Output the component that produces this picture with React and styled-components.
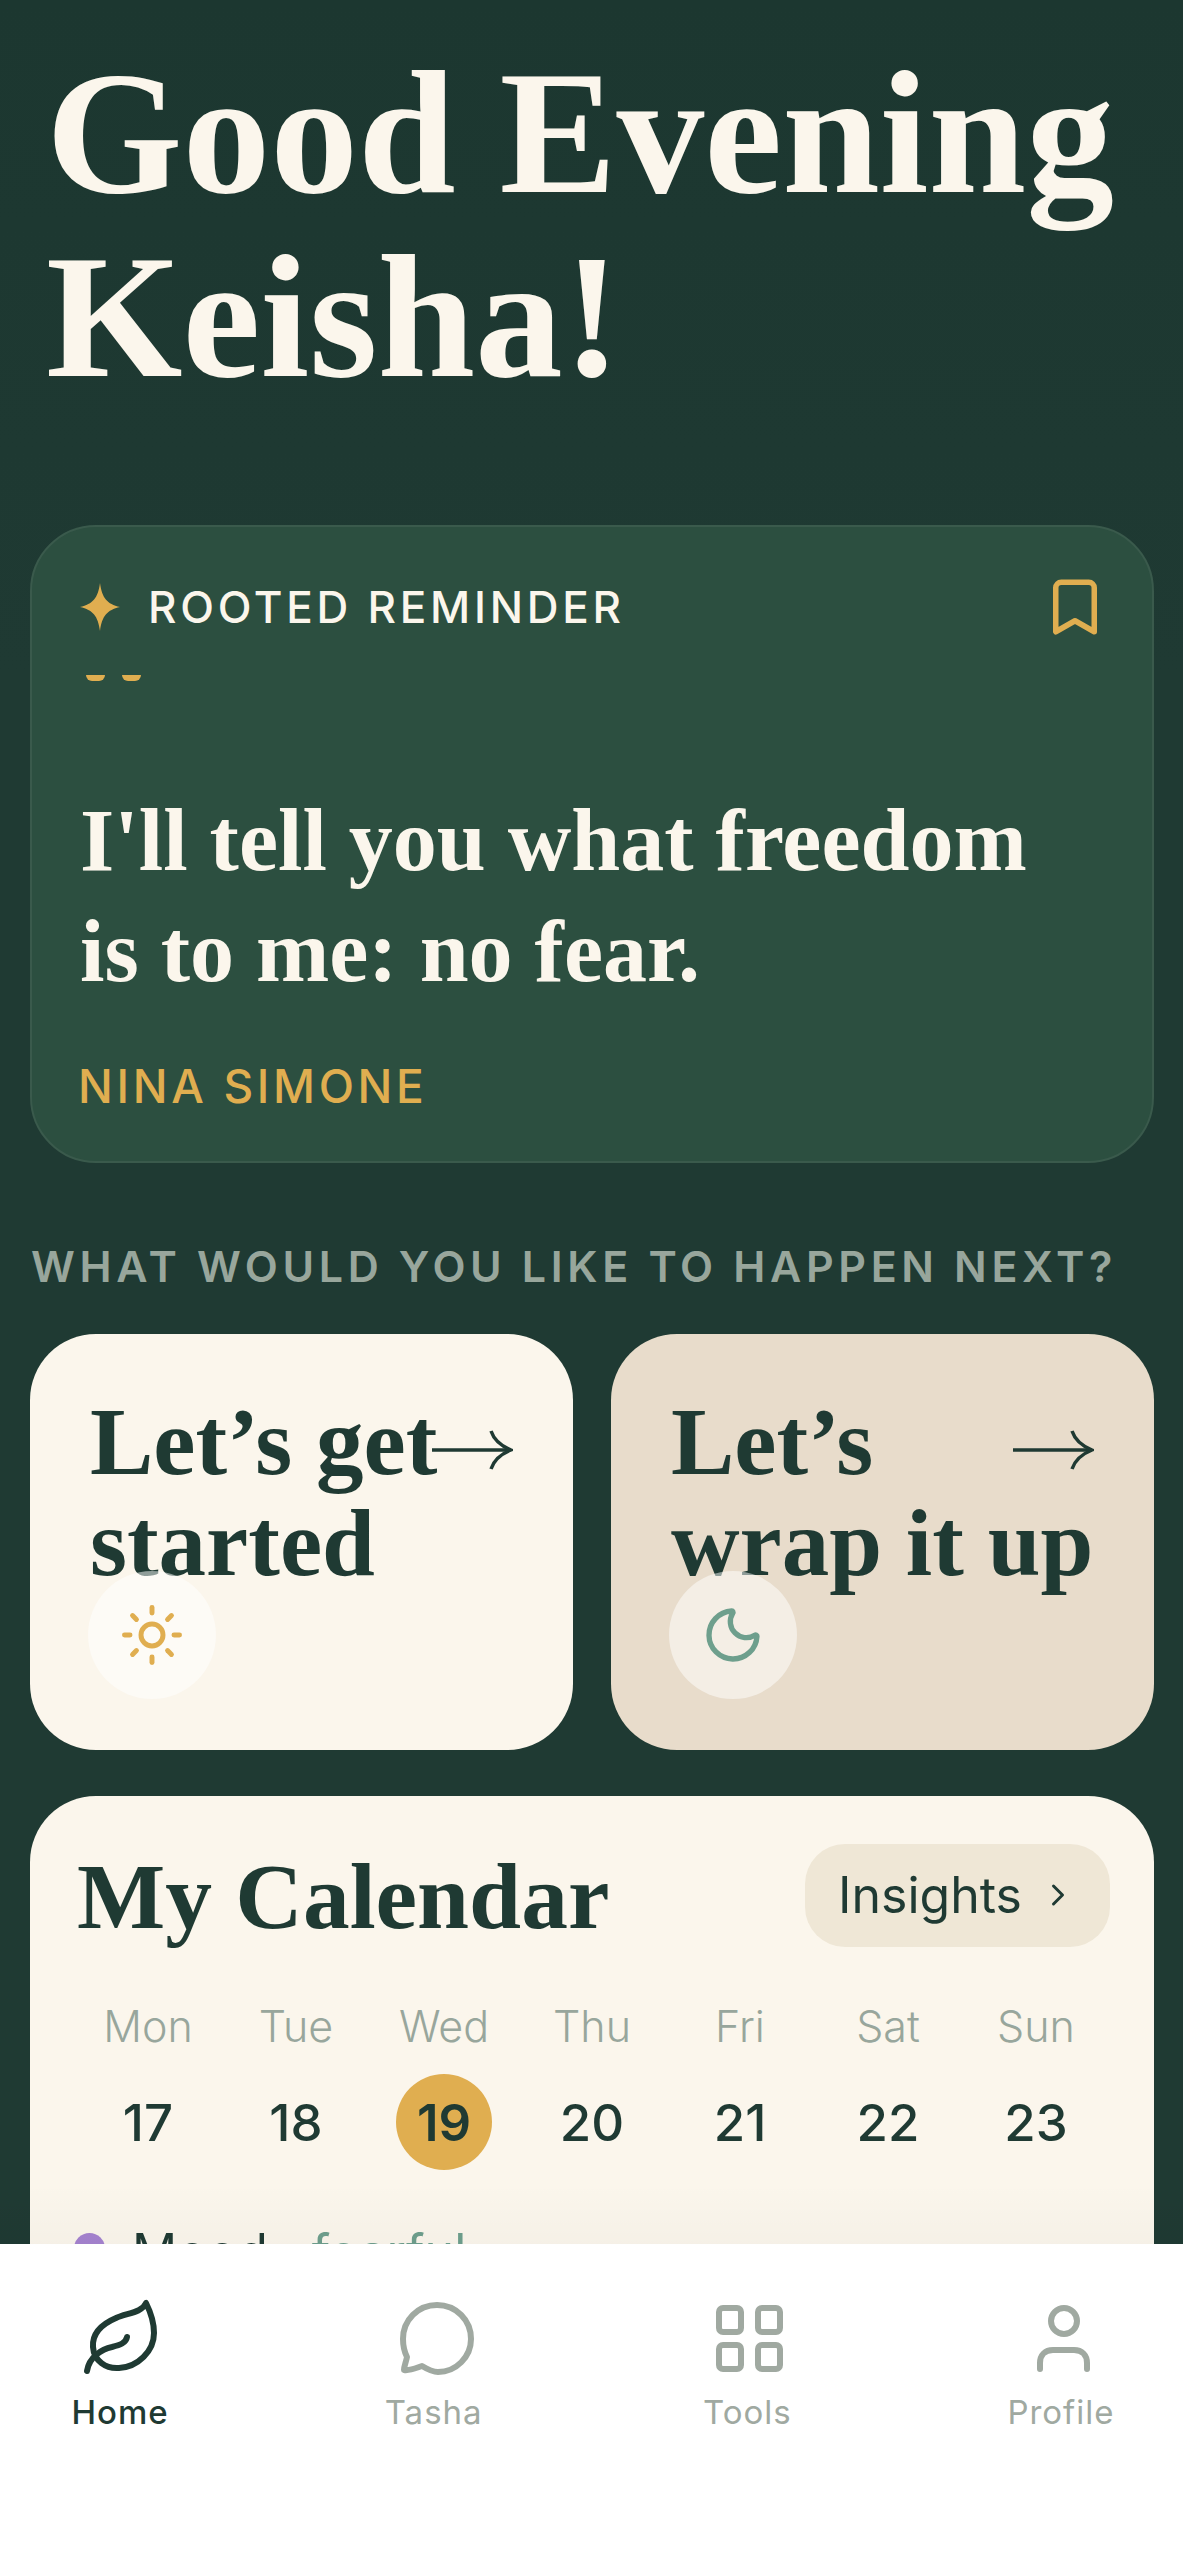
import React from "react";
import styled, { createGlobalStyle } from "styled-components";
import { Bookmark, ChevronRight, Moon, Sun } from "lucide-react";

const GlobalStyle = createGlobalStyle`
  html, body {
    margin: 0;
    padding: 0;
    background: #1f3a33;
  }
  * {
    box-sizing: border-box;
  }
`;

const serif = `"Liberation Serif", serif`;
const sans = `Inter, "Liberation Sans", sans-serif`;

const Screen = styled.div`
  width: 1183px;
  height: 2560px;
  display: flex;
  flex-direction: column;
  overflow: hidden;
  font-family: ${sans};
`;

const Scroller = styled.main`
  flex: 1;
  min-height: 0;
  overflow: hidden;
  background: linear-gradient(#1c3730, #1f3a33 30%);
  padding: 0 29px 0 30px;
`;

const Greeting = styled.h1`
  margin: 0;
  padding: 41px 0 0 16px;
  height: 525px;
  font-family: ${serif};
  font-weight: 700;
  font-size: 175.5px;
  line-height: 184px;
  color: #fbf6ec;
`;

const ReminderCard = styled.section`
  height: 638px;
  padding: 50px 44px 0 46px;
  border: 2px solid #3a5a4c;
  border-radius: 66px;
  background: #2c4f40;
`;

const ReminderHead = styled.div`
  display: flex;
  align-items: center;
  justify-content: space-between;
  height: 60px;
`;

const ReminderTitle = styled.div`
  display: flex;
  align-items: center;
  gap: 26px;
  font-size: 44px;
  font-weight: 500;
  letter-spacing: 0.085em;
  color: #fbf6ec;
`;

const QuoteDots = styled.div`
  display: flex;
  gap: 17px;
  margin: 38px 0 0 8px;
`;

const QuoteDot = styled.span`
  width: 19px;
  height: 6px;
  border-radius: 0 0 10px 10px;
  background: #e0ae50;
`;

const Quote = styled.p`
  margin: 104px 0 0 2px;
  font-family: ${serif};
  font-weight: 700;
  font-size: 88px;
  line-height: 111px;
  color: #fbf6ec;
`;

const Author = styled.div`
  margin-top: 51px;
  font-size: 46px;
  font-weight: 500;
  letter-spacing: 0.08em;
  color: #e0ae50;
`;

const SectionLabel = styled.h2`
  margin: 76px 0 0 1px;
  height: 95px;
  font-size: 43px;
  line-height: 54px;
  font-weight: 600;
  letter-spacing: 0.108em;
  white-space: nowrap;
  color: #98a69c;
`;

const ActionRow = styled.div`
  display: grid;
  grid-template-columns: 1fr 1fr;
  gap: 38px;
`;

const ActionCard = styled.article`
  height: 416px;
  padding: 58px 60px 0;
  border-radius: 66px;
  background: ${({ $tone }) => ($tone === "sand" ? "#e8dccb" : "#fbf6ec")};
`;

const ActionTop = styled.div`
  display: flex;
  justify-content: space-between;
  align-items: flex-start;
`;

const ActionTitle = styled.h3`
  margin: 0;
  width: 341px;
  white-space: nowrap;
  font-family: ${serif};
  font-weight: 700;
  font-size: 95px;
  line-height: 101px;
  color: #1f3a33;
`;

const ArrowIcon = styled.svg`
  flex: none;
  width: 82px;
  height: 44px;
  margin-top: 36px;
  fill: none;
  stroke: #1f3a33;
  stroke-width: 3.5;
`;

const IconBubble = styled.div`
  position: relative;
  width: 128px;
  height: 128px;
  margin: -23px 0 0 -2px;
  border-radius: 50%;
  display: flex;
  align-items: center;
  justify-content: center;
  background: rgba(255, 255, 255, 0.5);
  color: ${({ $color }) => $color};
`;

const CalendarCard = styled.section`
  margin-top: 46px;
  height: 700px;
  padding: 49px 44px 0;
  border-radius: 66px 66px 0 0;
  background: #fbf6ec;
`;

const CalendarHead = styled.div`
  display: flex;
  align-items: center;
  justify-content: space-between;
  padding-left: 3px;
`;

const CalendarTitle = styled.h2`
  margin: 0;
  font-family: ${serif};
  font-weight: 700;
  font-size: 93.5px;
  line-height: 103px;
  color: #1f3a33;
`;

const InsightsButton = styled.button`
  display: flex;
  align-items: center;
  gap: 18px;
  height: 103px;
  margin-top: -3px;
  padding: 0 34px 0 33px;
  border: 0;
  border-radius: 40px;
  background: #efe7d6;
  font-family: ${sans};
  font-size: 50px;
  color: #1f3a33;
`;

const WeekGrid = styled.div`
  display: grid;
  grid-template-columns: repeat(7, 148px);
  justify-items: center;
  align-items: center;
  margin: 48px 0 0 0;
`;

const DayName = styled.span`
  height: 60px;
  font-size: 43px;
  line-height: 60px;
  font-weight: 300;
  color: #98a69c;
`;

const DayNumber = styled.span`
  width: 96px;
  height: 96px;
  margin-top: 18px;
  border-radius: 50%;
  display: flex;
  align-items: center;
  justify-content: center;
  font-size: 51px;
  font-weight: ${({ $active }) => ($active ? 600 : 500)};
  color: #1f3a33;
  background: ${({ $active }) => ($active ? "#e0ae50" : "transparent")};
`;

const MoodRow = styled.div`
  display: flex;
  align-items: flex-start;
  margin-top: 52px;
  font-size: 50px;
  line-height: 60px;
`;

const MoodDot = styled.span`
  width: 31px;
  height: 31px;
  margin: 11px 27px 0 0;
  border-radius: 50%;
  background: #a583cf;
`;

const MoodWord = styled.span`
  color: ${({ $muted }) => ($muted ? "#6e9f8d" : "#1f3a33")};
  margin-right: 44px;
`;

const BottomNav = styled.nav`
  position: relative;
  flex: none;
  height: 316px;
  padding: 53px 27px 0 25px;
  display: flex;
  justify-content: space-between;
  background: #fff;
  &::before {
    content: "";
    position: absolute;
    left: 0;
    right: 0;
    bottom: 100%;
    height: 60px;
    background: linear-gradient(rgba(0, 0, 0, 0), rgba(0, 0, 0, 0.025));
    pointer-events: none;
  }
`;

const NavItem = styled.a`
  width: 190px;
  display: flex;
  flex-direction: column;
  align-items: center;
  gap: 15px;
  color: ${({ $active }) => ($active ? "#1f3a33" : "#a0a9a1")};
`;

const NavIcon = styled.svg`
  width: 84px;
  height: 80px;
  fill: none;
  stroke: currentColor;
  stroke-width: 6;
  stroke-linecap: round;
  stroke-linejoin: round;
`;

const NavLabel = styled.span`
  font-size: 33px;
  line-height: 40px;
  font-weight: ${({ $active }) => ($active ? 500 : 400)};
  letter-spacing: 0.03em;
  color: ${({ $active }) => ($active ? "#1f3a33" : "#a0a9a1")};
`;

const days = [
  ["Mon", 17],
  ["Tue", 18],
  ["Wed", 19],
  ["Thu", 20],
  ["Fri", 21],
  ["Sat", 22],
  ["Sun", 23],
];

function Arrow() {
  return (
    <ArrowIcon viewBox="0 0 82 44">
      <path d="M1 22h78" />
      <path d="M60 3c3 9 10 15 20 19c-10 4-17 10-20 19" />
    </ArrowIcon>
  );
}

function Sparkle() {
  return (
    <svg width="44" height="48" viewBox="0 0 44 48">
      <path
        d="M22 0c2 15 7 21 20 24c-13 3-18 9-20 24c-2-15-7-21-20-24c13-3 18-9 20-24z"
        fill="#e0ae50"
      />
    </svg>
  );
}

export default function App() {
  return (
    <Screen>
      <GlobalStyle />
      <Scroller>
        <Greeting>
          Good Evening
          <br />
          Keisha!
        </Greeting>

        <ReminderCard>
          <ReminderHead>
            <ReminderTitle>
              <Sparkle />
              ROOTED REMINDER
            </ReminderTitle>
            <Bookmark size={66} color="#e0ae50" strokeWidth={2} />
          </ReminderHead>
          <QuoteDots>
            <QuoteDot />
            <QuoteDot />
          </QuoteDots>
          <Quote>
            I'll tell you what freedom
            <br />
            is to me: no fear.
          </Quote>
          <Author>NINA SIMONE</Author>
        </ReminderCard>

        <SectionLabel>WHAT WOULD YOU LIKE TO HAPPEN NEXT?</SectionLabel>

        <ActionRow>
          <ActionCard>
            <ActionTop>
              <ActionTitle>
                Let’s get
                <br />
                started
              </ActionTitle>
              <Arrow />
            </ActionTop>
            <IconBubble $color="#e0ae50">
              <Sun size={66} strokeWidth={1.8} />
            </IconBubble>
          </ActionCard>
          <ActionCard $tone="sand">
            <ActionTop>
              <ActionTitle>
                Let’s
                <br />
                wrap it up
              </ActionTitle>
              <Arrow />
            </ActionTop>
            <IconBubble $color="#6e9f8d">
              <Moon size={64} strokeWidth={2} />
            </IconBubble>
          </ActionCard>
        </ActionRow>

        <CalendarCard>
          <CalendarHead>
            <CalendarTitle>My Calendar</CalendarTitle>
            <InsightsButton>
              Insights
              <ChevronRight size={36} strokeWidth={2} />
            </InsightsButton>
          </CalendarHead>
          <WeekGrid>
            {days.map(([name]) => (
              <DayName key={name}>{name}</DayName>
            ))}
            {days.map(([name, num]) => (
              <DayNumber key={num} $active={name === "Wed"}>
                {num}
              </DayNumber>
            ))}
          </WeekGrid>
          <MoodRow>
            <MoodDot />
            <MoodWord>Mood</MoodWord>
            <MoodWord $muted>fearful</MoodWord>
          </MoodRow>
        </CalendarCard>
      </Scroller>

      <BottomNav>
        <NavItem $active>
          <NavIcon viewBox="0 0 84 80">
            <path d="M68 6c-4 10-20 10-30 15C24 27 14 36 15 50c1 14 13 22 26 21C60 70 76 54 76 36C76 24 72 14 68 6z" />
            <path d="M9 74C11 60 24 52 34 50C42 48 48 46 49 40" />
          </NavIcon>
          <NavLabel $active>Home</NavLabel>
        </NavItem>
        <NavItem>
          <NavIcon viewBox="0 0 84 80">
            <path d="M45 8C26 8 11 23 11 42C11 50 13 56 15 60C14 65 12 69 12 73C18 74 24 71 30 69C35 72 40 75 46 75C64 75 79 60 79 42C79 23 64 8 45 8z" />
          </NavIcon>
          <NavLabel>Tasha</NavLabel>
        </NavItem>
        <NavItem>
          <NavIcon viewBox="0 0 84 80">
            <rect x="14" y="11" width="22" height="24" rx="4" />
            <rect x="53" y="11" width="22" height="24" rx="4" />
            <rect x="14" y="48" width="22" height="24" rx="4" />
            <rect x="53" y="48" width="22" height="24" rx="4" />
          </NavIcon>
          <NavLabel>Tools</NavLabel>
        </NavItem>
        <NavItem>
          <NavIcon viewBox="0 0 84 80">
            <circle cx="45" cy="24" r="13" />
            <path d="M21 72V66C21 58 26 53 34 53H55C63 53 68 58 68 66V72" />
          </NavIcon>
          <NavLabel>Profile</NavLabel>
        </NavItem>
      </BottomNav>
    </Screen>
  );
}
